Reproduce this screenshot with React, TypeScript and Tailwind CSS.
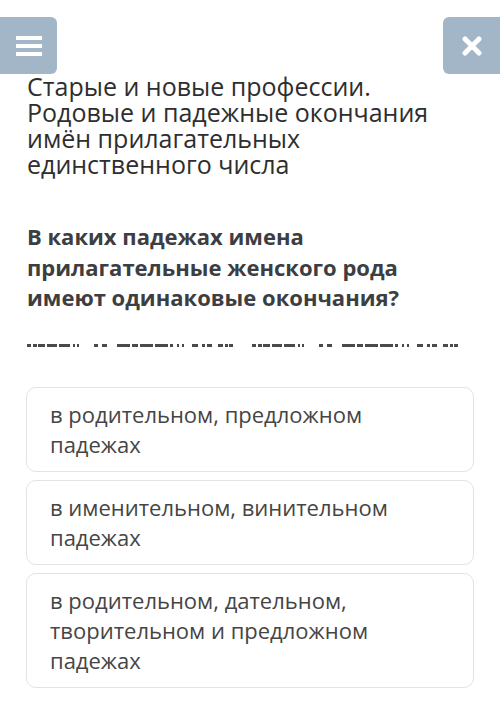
const options = [
  "в родительном, предложном падежах",
  "в именительном, винительном падежах",
  "в родительном, дательном, творительном и предложном падежах",
];

// cut-off line under the question: [start, width] of each dark dash in one half
const half: [number, number][] = [
  [0, 4], [6, 4], [11, 7], [20, 10], [32, 11], [46, 2], [50, 2], [67, 4], [75, 5],
  [90, 13], [105, 6], [113, 13], [128, 13], [143, 3], [150, 2], [155, 2],
  [165, 6], [175, 3], [180, 5], [191, 5], [198, 3], [202, 4],
];

function DashHalf() {
  let pos = 0;
  return (
    <div className="flex h-[3px] shrink-0">
      {half.map(([s, w], i) => {
        const gap = s - pos;
        pos = s + w;
        return <span key={i} className="h-[3px] bg-[#4a4a4a] shrink-0" style={{ marginLeft: gap, width: w }} />;
      })}
    </div>
  );
}

export default function App() {
  return (
    <div
      className="w-[500px] h-[702px] bg-white overflow-hidden relative"
      style={{ fontFamily: '"Open Sans", "Noto Sans", sans-serif' }}
    >
      <div className="flex justify-between pt-[17px]">
        <button className="w-[57px] h-[57px] bg-[#a3b6c7] rounded-r-[6px] flex items-center justify-center">
          <svg width="26" height="22" viewBox="0 0 26 22">
            <rect x="0" y="1" width="26" height="4" fill="white" />
            <rect x="0" y="9" width="26" height="4" fill="white" />
            <rect x="0" y="17" width="26" height="4" fill="white" />
          </svg>
        </button>
        <button className="w-[57px] h-[57px] bg-[#a3b6c7] rounded-l-[6px] flex items-center justify-center">
          <svg width="20" height="20" viewBox="0 0 20 20">
            <path d="M3 3 L17 17 M17 3 L3 17" stroke="white" strokeWidth="5" strokeLinecap="round" />
          </svg>
        </button>
      </div>

      <div className="px-[27px]">
        <h1 className="w-[420px] text-[25px] leading-[26px] text-[#2e2e2e] font-normal -mt-[1px]">
          Старые и новые профессии. Родовые и падежные окончания имён прилагательных
          единственного числа
        </h1>

        <p className="w-[400px] mt-[44px] text-[22px] leading-[30.5px] font-bold text-[#3d3e42]">
          В каких падежах имена прилагательные женского рода имеют одинаковые окончания?
        </p>

        <div className="mt-[31px] flex gap-[19px] overflow-hidden">
          <DashHalf />
          <DashHalf />
        </div>
      </div>

      <div className="mt-[40px] px-[26px] flex flex-col gap-[8px]">
        {options.map((o) => (
          <div
            key={o}
            className="border border-[#e3e3e3] rounded-[10px] pl-[23px] pr-[40px] py-[11.5px] text-[22px] leading-[30px] text-[#454545]"
          >
            {o}
          </div>
        ))}
      </div>
    </div>
  );
}
